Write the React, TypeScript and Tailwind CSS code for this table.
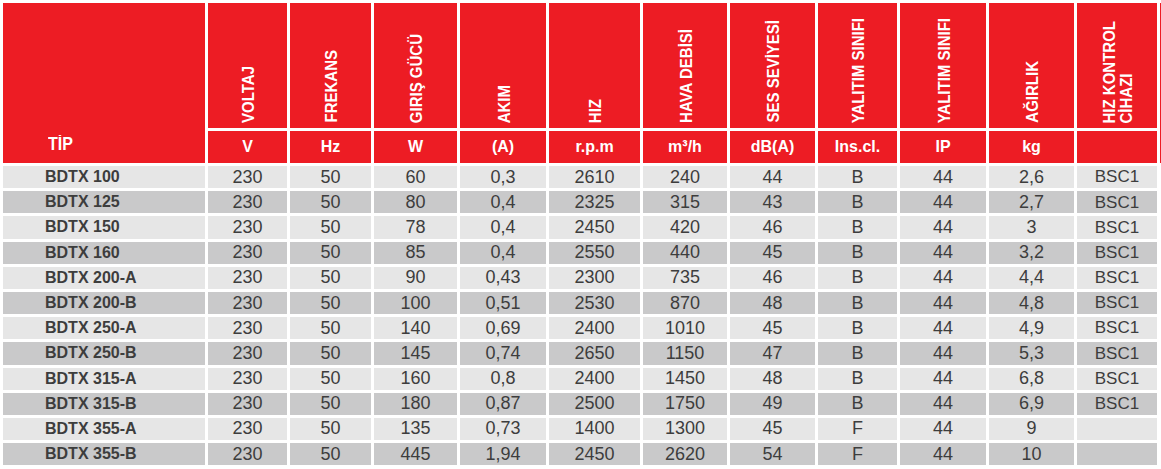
import React from 'react';

const font = { fontFamily: '"Liberation Sans", Arial, sans-serif' };

const headers: { label: string[]; unit: React.ReactNode }[] = [
  { label: ['VOLTAJ'], unit: 'V' },
  { label: ['FREKANS'], unit: 'Hz' },
  { label: ['GIRIŞ GÜCÜ'], unit: 'W' },
  { label: ['AKIM'], unit: '(A)' },
  { label: ['HIZ'], unit: 'r.p.m' },
  { label: ['HAVA DEBİSİ'], unit: 'm³/h' },
  { label: ['SES SEVİYESİ'], unit: 'dB(A)' },
  { label: ['YALITIM SINIFI'], unit: 'Ins.cl.' },
  { label: ['YALITIM SINIFI'], unit: 'IP' },
  { label: ['AĞIRLIK'], unit: 'kg' },
  { label: ['HIZ KONTROL', 'CİHAZI'], unit: '' },
];

const rows: string[][] = [
  ['BDTX 100', '230', '50', '60', '0,3', '2610', '240', '44', 'B', '44', '2,6', 'BSC1'],
  ['BDTX 125', '230', '50', '80', '0,4', '2325', '315', '43', 'B', '44', '2,7', 'BSC1'],
  ['BDTX 150', '230', '50', '78', '0,4', '2450', '420', '46', 'B', '44', '3', 'BSC1'],
  ['BDTX 160', '230', '50', '85', '0,4', '2550', '440', '45', 'B', '44', '3,2', 'BSC1'],
  ['BDTX 200-A', '230', '50', '90', '0,43', '2300', '735', '46', 'B', '44', '4,4', 'BSC1'],
  ['BDTX 200-B', '230', '50', '100', '0,51', '2530', '870', '48', 'B', '44', '4,8', 'BSC1'],
  ['BDTX 250-A', '230', '50', '140', '0,69', '2400', '1010', '45', 'B', '44', '4,9', 'BSC1'],
  ['BDTX 250-B', '230', '50', '145', '0,74', '2650', '1150', '47', 'B', '44', '5,3', 'BSC1'],
  ['BDTX 315-A', '230', '50', '160', '0,8', '2400', '1450', '48', 'B', '44', '6,8', 'BSC1'],
  ['BDTX 315-B', '230', '50', '180', '0,87', '2500', '1750', '49', 'B', '44', '6,9', 'BSC1'],
  ['BDTX 355-A', '230', '50', '135', '0,73', '1400', '1300', '45', 'F', '44', '9', ''],
  ['BDTX 355-B', '230', '50', '445', '1,94', '2450', '2620', '54', 'F', '44', '10', ''],
];

export default function App() {
  return (
    <div className="w-[1161px] h-[469px] bg-white overflow-hidden" style={font}>
      <div className="grid p-[3px] gap-[3px] grid-cols-[202px_79px_81px_83px_86px_91px_84px_85px_79px_86px_85px_80px_1px] grid-rows-[125px_32px_repeat(12,22.2px)]">
        <div className="row-span-2 bg-[#ed1c24] flex items-end pl-[45px] pb-[10px] text-white font-bold text-[16px] leading-[16px]">
          <span className="scale-y-[1.1]">TİP</span>
        </div>
        {headers.map((h, i) => (
          <div key={'h' + i} className="bg-[#ed1c24] flex items-end justify-center pb-[5px]">
            <div className="[writing-mode:vertical-rl] rotate-180 scale-x-[1.15] text-white font-bold text-[15px] leading-[15px] whitespace-nowrap">
              {h.label.map((l, j) => (
                <div key={j}>{l}</div>
              ))}
            </div>
          </div>
        ))}
        <div className="row-span-2 bg-[#ed1c24]" />
        {headers.map((h, i) => (
          <div key={'u' + i} className="bg-[#ed1c24] flex items-center justify-center text-white font-bold text-[16px]">
            <span className="scale-y-[1.08]">{h.unit}</span>
          </div>
        ))}
        {rows.map((r, ri) =>
          r.map((c, ci) => (
            <React.Fragment key={ri + '-' + ci}>
              <div
                className={
                  (ri % 2 === 0 ? 'bg-[#e6e6e6] ' : 'bg-[#c9c9ca] ') +
                  (ci === 0
                    ? 'flex items-center pl-[42px] font-bold text-[16px] text-[#3d3d3d]'
                    : ci === 11
                      ? 'flex items-center justify-center text-[17px] text-[#3d3d3d]'
                      : 'flex items-center justify-center text-[18px] text-[#3d3d3d]')
                }
              >
                {c}
              </div>
              {ci === r.length - 1 && <div />}
            </React.Fragment>
          ))
        )}
      </div>
    </div>
  );
}
